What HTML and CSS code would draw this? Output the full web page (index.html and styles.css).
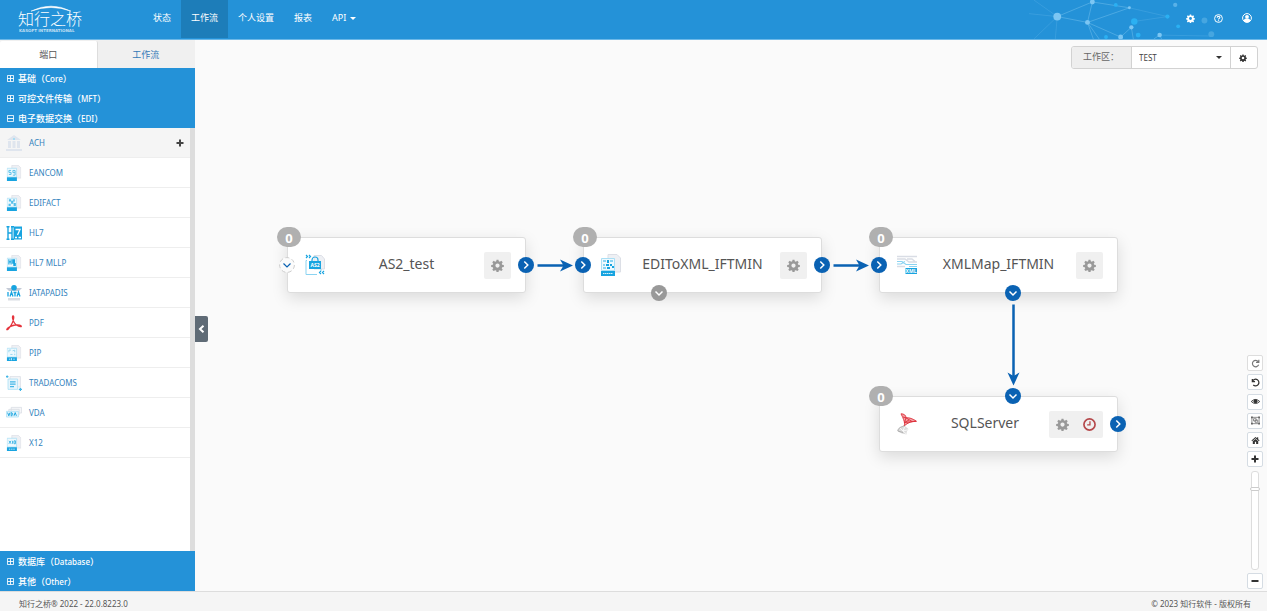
FILE: index.html
```html
<!DOCTYPE html>
<html lang="zh-CN">
<head>
<meta charset="utf-8">
<title>知行之桥</title>
<link rel="stylesheet" href="styles.css">
</head>
<body>
<svg class="defs" width="0" height="0" aria-hidden="true">
  <symbol id="gear" viewBox="0 0 16 16"><path fill="currentColor" fill-rule="evenodd" d="M6.800.8h2.400l.4 2 1.300.6 1.800-1.200 1.700 1.700-1.200 1.800.6 1.300 2 .4v2.300l-2 .4-.6 1.300 1.200 1.800-1.700 1.700-1.800-1.200-1.300.6-.4 2H6.800l-.4-2-1.300-.6-1.800 1.200-1.700-1.700 1.200-1.800-.6-1.300-2-.4V7.400l2-.4.6-1.300L1.600 3.900l1.700-1.700 1.800 1.200 1.300-.6zM8 5.500a2.600 2.600 0 1 0 0 5.200 2.600 2.600 0 0 0 0-5.200z"/></symbol>
  <symbol id="plusbox" viewBox="0 0 8 8"><path fill="none" stroke="currentColor" d="M.5.5h7v7h-7zM4 .5v7M.5 4h7"/></symbol>
  <symbol id="minusbox" viewBox="0 0 8 8"><path fill="none" stroke="currentColor" d="M.5.5h7v7h-7zM.5 4h7"/></symbol>
  <symbol id="plus" viewBox="0 0 8 8"><path fill="none" stroke="currentColor" stroke-width="2" d="M4 .5v7M.5 4h7"/></symbol>
  <symbol id="right" viewBox="0 0 16 16"><circle cx="8" cy="8" r="8" fill="currentColor"/><path fill="none" stroke="#fff" stroke-width="1.500" d="M6.300 4.500 9.800 8l-3.500 3.500"/></symbol>
  <symbol id="down" viewBox="0 0 16 16"><circle cx="8" cy="8" r="8" fill="currentColor"/><path fill="none" stroke="#fff" stroke-width="1.500" d="M4.500 6.500 8 10l3.500-3.500"/></symbol>
  <symbol id="docs" viewBox="0 0 20 22"><path fill="#eef0f4" stroke="#dcdfe6" d="M7 .5h9l3.500 3.500v14H7z"/><path fill="#eef9fe" stroke="#a9dff5" d="M.5 4.500h13v12H.5z"/><path fill="#18a4e0" d="M0 17h14v5H0z"/></symbol>
</svg>

<header class="top">
  <a class="logo" href="#"><svg class="arc" viewBox="0 0 40 6"><path d="M1 5.500Q20-4 39 5.500Q20-1.500 1 5.500z" fill="#fff" stroke="#fff" stroke-width=".5"/></svg><span class="brand">知行之桥</span><span class="sub">KASOFT INTERNATIONAL</span></a>
  <nav class="nav">
    <a href="#">状态</a><a class="on" href="#">工作流</a><a href="#">个人设置</a><a href="#">报表</a><a href="#">API<i class="caret"></i></a>
  </nav>
  <svg class="net" viewBox="0 0 240 40" aria-hidden="true">
    <g stroke="#6dbdec" stroke-width=".7" opacity=".8"><path fill="none" d="M30 17 66 2M30 17l31 6M66 2l-5 21M66 2l38 6M61 23l43-15M61 23l34 15M61 23l6 17M61 23l12 17M106 28l-11 10M106 28l2 12M135 36l2 4M135 36l-6 4"/><path opacity=".5" fill="none" d="M30 17 6 0M30 17 1 14M30 17 6 40M30 17l-2 23M109 22l34-5M104 8l39 9M135 36l55 1"/></g>
    <g fill="#7cc6f3"><circle cx="30" cy="17" r="4"/><circle cx="66" cy="2" r="2.500"/><circle cx="61" cy="23" r="2.500"/><circle cx="104" cy="8" r="1.500"/><circle cx="106" cy="28" r="2.200"/><circle cx="95" cy="38" r="2.500"/><circle cx="135" cy="36" r="2.300"/><circle cx="151" cy="5" r="2.200" opacity=".6"/></g>
    <g fill="#2bb0f2"><circle cx="109" cy="22" r="3.300"/><circle cx="113" cy="36" r="2.500"/><circle cx="90" cy="5" r="2"/><circle cx="143" cy="17" r="2.200"/><circle cx="154" cy="27" r="2"/><circle cx="80" cy="38" r="2"/></g>
    <g fill="#46a6e0"><circle cx="181" cy="21" r="3"/><circle cx="188" cy="35" r="3"/></g>
  </svg>
  <div class="tools">
    <button aria-label="设置"><svg width="9" height="9"><use href="#gear"/></svg></button>
    <button aria-label="帮助"><svg width="9" height="9" viewBox="0 0 12 12"><circle cx="6" cy="6" r="5.200" fill="none" stroke="#fff" stroke-width="1.300"/><path fill="none" stroke="#fff" stroke-width="1.500" d="M4.200 4.800C4.300 2.700 7.800 2.700 7.800 4.600 7.800 5.900 6 5.800 6 7.300M6 8.200v1.300"/></svg></button>
    <button aria-label="用户"><svg width="10" height="10" viewBox="0 0 12 12"><circle cx="6" cy="6" r="5.300" fill="none" stroke="#fff" stroke-width="1.200"/><circle cx="6" cy="4.600" r="2.300" fill="#fff"/><path fill="#fff" d="M2 9.500c.5-2.500 2-2.800 4-2.800s3.500.3 4 2.800C8.500 11.500 3.500 11.500 2 9.500z"/></svg></button>
  </div>
</header>

<main class="main">
  <aside class="side">
    <div class="tabs"><button class="tab on">端口</button><button class="tab">工作流</button></div>
    <button class="group"><svg><use href="#plusbox"/></svg><span>基础（<small>Core</small>）</span></button>
    <button class="group"><svg><use href="#plusbox"/></svg><span>可控文件传输（<small>MFT</small>）</span></button>
    <button class="group"><svg><use href="#minusbox"/></svg><span>电子数据交换（<small>EDI</small>）</span></button>
    <div class="list">
      <a class="item on" href="#"><svg viewBox="0 0 16 16"><path fill="#dfe5ee" d="M8 0 15 5H1zM2 6h3v7H2zM6.500 6h3v7h-3zM11 6h3v7h-3zM0 14h16v2H0z"/><path fill="#a9dcf3" d="M7 3h2v2H7z"/></svg><span>ACH</span><svg class="add"><use href="#plus"/></svg></a>
      <a class="item" href="#"><svg viewBox="0 0 20 22"><use href="#docs"/><path fill="none" stroke="#57bfe9" stroke-width="1.300" d="M6 7.500H3v2.700h3V13H3M11.500 10.500H8.500v-3h3V14h-3"/></svg><span>EANCOM</span></a>
      <a class="item" href="#"><svg viewBox="0 0 20 22"><use href="#docs"/><path fill="#57bfe9" d="M3 6h3v3H3zM6 8h3v4H6zM9 6h2v3H9zM9.500 11h3v4h-3zM2.500 12h3v3h-3z"/></svg><span>EDIFACT</span></a>
      <a class="item" href="#"><svg viewBox="0 0 16 16"><path fill="#18a4e0" d="M7.500 1.500H16v13H7.500z"/><path fill="none" stroke="#18a4e0" stroke-width="1.400" d="M2 2v12M6 2v12M2 8h4M.5 1.700h3M5 1.700h3M.5 14.300h3M5 14.300h3"/><path fill="none" stroke="#fff" stroke-width="1.300" d="M9.500 4.500H14L11.500 10M9 12.500h2M12.500 12.500H15"/></svg><span>HL7</span></a>
      <a class="item" href="#"><svg viewBox="0 0 20 22"><use href="#docs"/><path fill="none" stroke="#18a4e0" stroke-width="1.500" d="M3 6v7M6 6v7M3 9.500h3"/><path fill="#18a4e0" d="M7.500 6h4v5h1v4H9v-3H7.500z"/></svg><span>HL7 MLLP</span></a>
      <a class="item" href="#"><svg viewBox="0 0 16 16"><path fill="#c3cad6" d="M0 3h16l-3 3H3z"/><circle cx="8" cy="2.800" r="2.800" fill="#18a4e0"/><path fill="none" stroke="#18a4e0" stroke-width="1.300" d="M2 7v4.500M4 11.500 5.500 7 7 11.500M7.500 7.500h3M9 7.500v4M11 11.500 12.500 7l1.500 4.500"/><path fill="#d9dce2" d="M2 13h12v2.500H2z"/></svg><span>IATAPADIS</span></a>
      <a class="item" href="#"><svg viewBox="0 0 16 16"><path fill="none" stroke="#e5343d" stroke-width="1.300" d="M7 .8C8.500.8 7.500 6 5.500 9.500S1 15.500.8 14.500 5 10.500 9 10s6.500.3 6.300 1.300S10.500 11 8.500 8 6 1 7 .8z"/></svg><span>PDF</span></a>
      <a class="item" href="#"><svg viewBox="0 0 20 22"><use href="#docs"/><path fill="none" stroke="#7accec" d="M3 10V7h3M8 8l3-1v3M5 13h3M11 12v2"/><path stroke="#fff" d="M3 19.500h2M6.500 18v3M9 19.500h2"/></svg><span>PIP</span></a>
      <a class="item" href="#"><svg viewBox="0 0 20 20"><path fill="#f5f6f9" stroke="#d9dde5" d="M5 2h13v13H5z"/><path fill="#e6f5fc" stroke="#a9dff5" d="M2.500 5h12v13h-12z"/><path stroke="#43b6e6" stroke-width="1.500" d="M5 8.500h7M5 11.500h7M5 14.500h5"/><path stroke="#43b6e6" stroke-width="1.500" d="M0 2h3M1.500.5v3M16 18h4M18 16v4"/></svg><span>TRADACOMS</span></a>
      <a class="item" href="#"><svg viewBox="0 0 20 20"><path fill="#f5f6f9" stroke="#d9dde5" d="M6.500 3h13v7h-13zM3.500 5.500h13v7h-13z"/><path fill="#e6f5fc" stroke="#a9dff5" d="M.5 8h15v7H.5z"/><path fill="none" stroke="#18a4e0" stroke-width="1.200" d="m2 9.500 1.500 4 1.500-4M6.500 9.500v4C9 13.500 9 9.500 6.500 9.500M10 13.500l1.500-4 1.500 4"/></svg><span>VDA</span></a>
      <a class="item" href="#"><svg viewBox="0 0 20 22"><use href="#docs"/><path fill="none" stroke="#43b6e6" stroke-width="1.300" d="m3 8 3 4M6 8l-3 4M8 8v4M10 8h2v4h-2z"/><path stroke="#fff" d="M3 19.500h2M6 19.500h2M9 19.500h2"/></svg><span>X12</span></a>
    </div>
    <button class="group"><svg><use href="#plusbox"/></svg><span>数据库（<small>Database</small>）</span></button>
    <button class="group"><svg><use href="#plusbox"/></svg><span>其他（<small>Other</small>）</span></button>
  </aside>

  <section class="canvas">
    <button class="fold" aria-label="收起"><svg width="7" height="8" viewBox="0 0 7 8"><path fill="none" stroke="#fff" stroke-width="2" d="M5.500.8 2 4l3.500 3.200"/></svg></button>

    <div class="space">
      <label for="ws">工作区：</label>
      <span class="pick"><select id="ws"><option>TEST</option></select><i class="caret"></i></span>
      <button aria-label="工作区设置"><svg width="8" height="8"><use href="#gear"/></svg></button>
    </div>

    <div class="node n1">
      <span class="count">0</span>
      <svg class="pic" viewBox="0 0 20 22"><path fill="#eef0f4" stroke="#dcdfe6" d="M9 1.500h7.500L19.500 5v10H9z"/><path fill="#fff" stroke="#8bd3f1" d="M2 6.500H1V20.500h11M16 15v2"/><path fill="none" stroke="#18a4e0" stroke-width="1.200" d="m1 1 1.500 1.500L1 4M4 1l1.500 1.500L4 4M16 17l-1.500 1.500L16 20M19 17l-1.500 1.500L19 20M7 7.500V6a3 3 0 0 1 6 0v1.500"/><path fill="#18a4e0" d="M4 7h12v8H4z"/><text x="10" y="13" class="tiny">AS2</text></svg>
      <h2>AS2_test</h2>
      <div class="acts"><button aria-label="设置"><svg><use href="#gear"/></svg></button></div>
      <svg class="port left" viewBox="0 0 16 16"><circle cx="8" cy="8" r="7.400" fill="#fbfbfb" stroke="#ccc" stroke-dasharray="4 2.600"/><path fill="none" stroke="#0a62b3" stroke-width="1.200" d="M4.500 6.500 8 10l3.500-3.500"/></svg>
      <svg class="port out"><use href="#right"/></svg>
    </div>
    <div class="node n2">
      <span class="count">0</span>
      <svg class="pic" viewBox="0 0 20 22"><use href="#docs"/><path fill="#8bd3f1" d="M2 6h3v2H2zM9 6h3v2H9zM2 10h2v2H2zM2 13h3v2H2z"/><path fill="#18a4e0" d="M6 6h2v3H6zM5 10h3v2H5zM9 10h2v2H9zM11 12h2v2h-2zM6 13h3v2H6z"/><path stroke="#d5effa" stroke-dasharray="1.500 .5" d="M2 19.500h10"/></svg>
      <h2>EDIToXML_IFTMIN</h2>
      <div class="acts"><button aria-label="设置"><svg><use href="#gear"/></svg></button></div>
      <svg class="port left"><use href="#right"/></svg>
      <svg class="port out"><use href="#right"/></svg>
      <svg class="port bottom idle"><use href="#down"/></svg>
    </div>
    <div class="node n3">
      <span class="count">0</span>
      <svg class="pic" viewBox="0 0 20 22"><path fill="none" stroke="#d9dde5" stroke-width="1.300" d="M0 2.500h20M0 5h8l4 3h8M10 5h5l3 2.500M0 12.500h8"/><path fill="none" stroke="#8bd3f1" stroke-width="1.200" d="M0 7.500h5l4 3h11M0 10h4l4-2.500M12 12.500h8"/><path fill="#18a4e0" d="M8.500 14H20v6H8.500z"/><text x="14" y="19" class="tiny">XML</text></svg>
      <h2>XMLMap_IFTMIN</h2>
      <div class="acts"><button aria-label="设置"><svg><use href="#gear"/></svg></button></div>
      <svg class="port left"><use href="#right"/></svg>
      <svg class="port bottom mid"><use href="#down"/></svg>
    </div>
    <div class="node n4">
      <span class="count">0</span>
      <svg class="pic" viewBox="0 0 20 22"><path fill="#f4a3a7" d="M4 .8c3 0 5 1.500 5 4 3-.5 7 1 10.500 3.500C15 8 11 9.500 7 13 9 10 5 3 4 .8z"/><g fill="none" stroke="#dd2f3a" stroke-width=".9"><path d="M4 .8c3 0 5 1.500 5 4 3-.5 7 1 10.500 3.500C15 8 11 9.500 7 13 9 10 5 3 4 .8zM9 4.800 7.500 9.500 19 8.300M6 4l3 .8 6 3.700M7.500 9.500 12 7"/></g><path fill="#dcdcdc" d="M.8 18C1 15 4 13.500 8 13l4 3.500c-2 1-3 2.500-2 5C6 21 2 20 .8 18z"/><path fill="none" stroke="#fff" stroke-width=".8" d="m8 13-2 5 6-1.500M6 18l4 3.500M3 15l3 3"/><path fill="none" stroke="#999" stroke-width=".7" d="M8 13C4 13.500 1 15 .8 18L6 19.500"/></svg>
      <h2>SQLServer</h2>
      <div class="acts"><button aria-label="设置"><svg><use href="#gear"/></svg></button><button aria-label="计划"><svg viewBox="0 0 14 14"><circle cx="7" cy="7" r="6" fill="none" stroke="#b5484b" stroke-width="1.800"/><path fill="none" stroke="#b5484b" stroke-width="1.400" d="M7.500 3.500v4H4.500"/></svg></button></div>
      <svg class="port topp mid"><use href="#down"/></svg>
      <svg class="port out"><use href="#right"/></svg>
    </div>

    <svg class="wires" aria-hidden="true">
      <g stroke="#0a62b3" stroke-width="2.500"><path d="M342.500 225.500h30M638.500 225.500h30M818.500 264.500v75"/></g>
      <g fill="#0a62b3"><path d="m378 225.500-13-6 3.500 6-3.500 6zM674 225.500l-13-6 3.500 6-3.500 6zM818.500 345.500l-6-13 6 3.500 6-3.500z"/></g>
    </svg>

    <div class="zoom">
      <button class="soft" aria-label="重做"><svg viewBox="0 0 10 10"><path fill="none" stroke="currentColor" stroke-width="1.300" d="M8 2.800A3.600 3.600 0 1 0 8.500 6.500M8.700.8v3H5.600"/></svg></button>
      <button aria-label="撤销"><svg viewBox="0 0 10 10"><path fill="none" stroke="currentColor" stroke-width="1.400" d="M1.800 3.300A3.700 3.700 0 1 1 2.500 7.700M1.500 1v3h3"/></svg></button>
      <button aria-label="查看"><svg viewBox="0 0 10 10"><path fill="none" stroke="currentColor" d="M.3 5Q5 .5 9.700 5 5 9.500.3 5z"/><circle cx="5" cy="4.800" r="2.200" fill="currentColor"/></svg></button>
      <button aria-label="选择"><svg viewBox="0 0 10 10"><path fill="none" stroke="#666" stroke-width=".8" d="M1 1.500h8v7H1zM2.800 3h3v2.500h-3zM4.500 4.500h3V7h-3z"/><path fill="#666" d="M0 .5h2v2H0zM8 .5h2v2H8zM0 7.500h2v2H0zM8 7.500h2v2H8z"/></svg></button>
      <button aria-label="主页"><svg viewBox="0 0 10 10"><path fill="currentColor" d="M5 1 .5 5l.7.7L5 2.500l3.800 3.200.7-.7L8 3.700V1.500H6.800v1zM2 5.700 5 3.300l3 2.400V9H5.700V6.500H4.300V9H2z"/></svg></button>
      <button aria-label="放大"><svg class="sm"><use href="#plus"/></svg></button>
      <input type="range" aria-label="缩放" min="0" max="100" value="84">
      <button aria-label="缩小"><svg class="sm" viewBox="0 0 8 8"><path stroke="currentColor" stroke-width="2" d="M.5 4h7"/></svg></button>
    </div>
  </section>
</main>

<footer class="foot"><span>知行之桥® 2022 - 22.0.8223.0</span><span>© 2023 知行软件 - 版权所有</span></footer>
</body>
</html>
```
FILE: styles.css
```css
* { box-sizing: border-box; }
body {
  margin: 0;
  min-height: 100vh;
  display: flex;
  flex-direction: column;
  background: #fafafa;
  color: #555;
  font: 9px/20px "Noto Sans", "Noto Sans CJK SC", sans-serif;
}
a { text-decoration: none; color: inherit; }
button, select { font: inherit; color: inherit; border: 0; margin: 0; padding: 0; background: none; }
svg { display: block; }
.defs { position: absolute; }
.caret {
  display: inline-block;
  border: 3px solid transparent;
  border-top-color: currentColor;
  border-bottom: 0;
}

.top {
  display: flex;
  position: relative;
  height: 40px;
  background: #2492d8;
  border-bottom: 1px solid #6cb8e8;
  color: #fff;
}
.logo { width: 124px; margin-right: 19px; padding: 10px 0 0 18px; position: relative; }
.arc { position: absolute; left: 30px; top: 5px; width: 42px; height: 7px; }
.brand { display: block; font-size: 16px; line-height: 19px; font-weight: 300; }
.sub { display: block; font: 700 4px/4px "DejaVu Sans", sans-serif; white-space: nowrap; opacity: .7; padding-left: 1px; }
.nav { display: flex; }
.nav a { padding: 8px 10px 0; height: 38px; }
.nav .on { background: #1d7db9; }
.nav .caret { margin: 0 0 1px 4px; }
.net { position: absolute; right: 2px; top: 0; width: 240px; height: 39px; }
.tools { position: relative; display: flex; gap: 19px; margin-left: auto; padding-right: 15px; align-items: center; height: 36px; }

.main { flex: 1; display: flex; }
.side { width: 195px; display: flex; flex-direction: column; background: #fff; }
.tabs { display: flex; height: 28px; background: #f0f0f0; padding: 1px 1px 0 0; }
.tab { flex: 1; color: #337ab7; }
.tab.on { background: #fff; color: #555; border-right: 1px solid #ddd; border-radius: 2px 2px 0 0; }
.group {
  display: flex;
  align-items: center;
  gap: 4px;
  height: 20px;
  padding: 1px 0 0 7px;
  background: #2492d8;
  color: #fff;
  font-weight: 500;
}
.group small { font-size: 8px; }
.group svg { width: 7px; height: 7px; }
.list { flex: 1; border-right: 5px solid #ddd; }
.item {
  display: flex;
  align-items: center;
  gap: 7px;
  height: 30px;
  padding: 1px 6px 0;
  border-bottom: 1px solid #eee;
  color: #3383bd;
  font-size: 8px;
}
.item svg { width: 16px; height: 16px; }
.item.on { background: #f5f5f5; }
.item span { flex: 1; }
.item .add { width: 8px; height: 8px; color: #444; }

.canvas { flex: 1; position: relative; overflow: hidden; }
.fold {
  position: absolute;
  left: 0;
  top: 276px;
  width: 13px;
  height: 26px;
  display: grid;
  place-items: center;
  background: #5f6b76;
  border-radius: 0 2px 2px 0;
}
.space {
  position: absolute;
  right: 9px;
  top: 6px;
  display: flex;
  height: 23px;
  border: 1px solid #d2d2d2;
  border-radius: 3px;
  background: #fff;
  overflow: hidden;
}
.space label { width: 60px; padding-left: 11px; background: #eee; border-right: 1px solid #d2d2d2; color: #666; }
.pick { position: relative; width: 98px; }
.pick select { width: 100%; height: 21px; padding-left: 7px; appearance: none; font-size: 8px; color: #444; }
.pick .caret { position: absolute; right: 8px; top: 9px; color: #333; pointer-events: none; }
.space button { width: 27px; padding-right: 2px; border-left: 1px solid #d2d2d2; display: grid; place-items: center; color: #333; }

.node {
  position: absolute;
  display: flex;
  align-items: center;
  width: 239px;
  height: 56px;
  padding: 0 14px 0 17px;
  background: #fff;
  border: 1px solid #ddd;
  border-radius: 3px;
  box-shadow: 0 5px 16px rgba(0, 0, 0, .13);
}
.n1 { left: 92px; top: 197px; }
.n2 { left: 388px; top: 197px; }
.n3 { left: 684px; top: 197px; }
.n4 { left: 684px; top: 356px; }
.node h2 { flex: 1; margin: 0; padding: 0 0 2px 4px; text-align: center; font-size: 14px; line-height: 20px; font-weight: 400; }
.pic { width: 20px; height: 22px; }
.tiny { font: 700 5px "Noto Sans", sans-serif; fill: #fff; text-anchor: middle; }
.acts { display: flex; border-radius: 2px; background: #f0f0f0; }
.acts button { width: 27px; height: 27px; display: grid; place-items: center; color: #999; }
.acts svg { width: 13px; height: 13px; }
.count {
  position: absolute;
  left: -11px;
  top: -11px;
  width: 24px;
  height: 20px;
  border-radius: 10px;
  background: #b0b0b0;
  color: #fff;
  font-size: 13px;
  line-height: 22px;
  font-weight: 700;
  text-align: center;
}
.port { position: absolute; width: 16px; height: 16px; color: #0a62b3; }
.left { left: -9px; top: 19px; }
.out { right: -9px; top: 19px; }
.bottom { left: 67px; bottom: -9px; }
.topp { top: -9px; }
.mid { left: 125px; }
.idle { color: #999; }
.wires { position: absolute; left: 0; top: 0; width: 100%; height: 100%; pointer-events: none; }

.zoom {
  position: absolute;
  right: 4px;
  bottom: 2px;
  height: 234px;
  display: flex;
  flex-direction: column;
  align-items: center;
  justify-content: space-between;
}
.zoom button {
  width: 16px;
  height: 16px;
  display: grid;
  place-items: center;
  background: #fff;
  border: 1px solid #d5dce3;
  border-radius: 2px;
  color: #333;
}
.zoom .soft { color: #777; border-color: #ddd; }
.zoom svg { width: 9px; height: 9px; }
.zoom .sm { width: 8px; height: 8px; }
.zoom input {
  appearance: none;
  writing-mode: vertical-lr;
  direction: rtl;
  width: 10px;
  height: 99px;
  margin: 0;
  background: none;
}
.zoom input::-webkit-slider-runnable-track {
  width: 8px;
  height: 99px;
  background: #fff;
  border: 1px solid #ddd;
  border-radius: 3px;
}
.zoom input::-webkit-slider-thumb {
  appearance: none;
  width: 10px;
  height: 4px;
  margin-left: -2px;
  background: #fff;
  border: 1px solid #ccc;
  border-radius: 2px;
}

.foot {
  display: flex;
  justify-content: space-between;
  height: 20px;
  padding: 2px 16px 0 19px;
  background: #f5f5f5;
  border-top: 1px solid #ddd;
  font-size: 8px;
}
```
